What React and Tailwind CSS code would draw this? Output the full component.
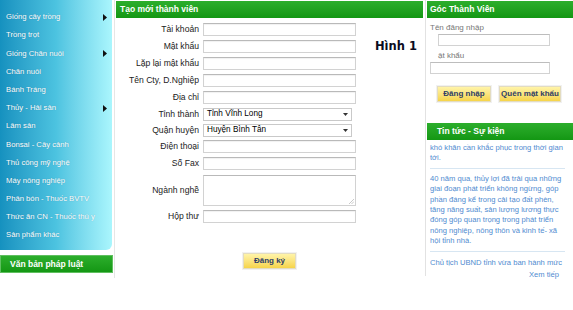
import React from "react";

const FONT = { fontFamily: '"Liberation Sans", Arial, sans-serif' };

const sideItems = [
  ["Giống cây trồng", true],
  ["Trồng trọt", false],
  ["Giống Chăn nuôi", true],
  ["Chăn nuôi", false],
  ["Bánh Tráng", false],
  ["Thủy - Hải sản", true],
  ["Lâm sản", false],
  ["Bonsai - Cây cảnh", false],
  ["Thủ công mỹ nghệ", false],
  ["Máy nông nghiệp", false],
  ["Phân bón - Thuốc BVTV", false],
  ["Thức ăn CN - Thuốc thú y", false],
  ["Sản phẩm khác", false],
];

function Arrow() {
  return (
    <svg width="4" height="7" viewBox="0 0 4 7" className="mr-[5px]">
      <polygon points="0,0 4,3.5 0,7" fill="#111" />
    </svg>
  );
}

function Input() {
  return (
    <div className="w-[153px] h-[13px] shrink-0 bg-white border border-[#d2d2d2] border-t-[#b9b9b9] shadow-[inset_0_1px_1px_rgba(0,0,0,0.06)]" />
  );
}

function Select({ value }) {
  return (
    <div className="w-[149px] h-[13px] shrink-0 bg-white border border-[#c9c9c9] flex items-center justify-between pl-[3px] pr-[3px]">
      <span className="text-[8.2px] text-black leading-none">{value}</span>
      <svg width="5" height="3" viewBox="0 0 5 3">
        <polygon points="0,0 5,0 2.5,3" fill="#333" />
      </svg>
    </div>
  );
}

function Row({ label, h = "h-[17px]", children }) {
  return (
    <div className={`flex items-center ${h}`}>
      <div className="w-[87px] shrink-0 text-right text-[8.6px] text-[#222] pr-[4px] leading-none">{label}</div>
      {children}
    </div>
  );
}

function YButton({ children, w }) {
  return (
    <div
      className={`${w} h-[16px] shrink-0 flex items-center justify-center border border-[#e3dcc0] bg-gradient-to-b from-[#fff4a8] to-[#f6d448] text-[8px] font-bold text-[#2e3d66] shadow-[0_0_0_1px_#f1f1f1]`}
    >
      {children}
    </div>
  );
}

function GreenHeader({ children, className = "" }) {
  return (
    <div
      className={`h-[17px] flex items-center bg-gradient-to-b from-[#2cae2c] to-[#139713] text-white text-[8.5px] font-bold ${className}`}
    >
      {children}
    </div>
  );
}

export default function App() {
  return (
    <div className="w-[573px] h-[310px] bg-white flex items-start overflow-hidden" style={FONT}>
      {/* Left column */}
      <div className="w-[113px] shrink-0">
        <div className="h-[250px] w-[112px] rounded-br-[6px] bg-gradient-to-r from-[#1591bf] via-[#4cc3e0] to-[#aaf6fd] pt-[8px]">
          {sideItems.map(([t, arrow]) => (
            <div key={t} className="h-[18.2px] flex items-center justify-between pl-[6px]">
              <span className="text-white text-[7.7px] leading-none [text-shadow:0_0_1px_rgba(0,60,90,0.35)]">{t}</span>
              {arrow && <Arrow />}
            </div>
          ))}
        </div>
        <div className="mt-[5px] h-[18px] w-[113px] bg-gradient-to-b from-[#2cae2c] to-[#139713] border border-[#5fbf5f] flex items-center pl-[9px] text-white text-[8.5px] font-bold">
          Văn bản pháp luật
        </div>
      </div>

      {/* separator */}
      <div className="w-px h-[278px] bg-[#e6e6e6] ml-[1px] shrink-0" />

      {/* Center column */}
      <div className="w-[307px] ml-[1px] shrink-0">
        <GreenHeader className="mt-[1px] pl-[4px]">Tạo mới thành viên</GreenHeader>
        <div className="mt-[3px]">
          <Row label="Tài khoản"><Input /></Row>
          <Row label="Mật khẩu">
            <Input />
            <span
              className="ml-[19px] text-[11.5px] font-bold text-[#0b0b1e] leading-none"
              style={{ fontFamily: '"DejaVu Sans", Verdana, sans-serif' }}
            >
              Hình 1
            </span>
          </Row>
          <Row label="Lặp lại mật khẩu"><Input /></Row>
          <Row label="Tên Cty, D.Nghiệp"><Input /></Row>
          <Row label="Địa chỉ"><Input /></Row>
          <Row label="Tỉnh thành" h="h-[16px]"><Select value="Tỉnh Vĩnh Long" /></Row>
          <Row label="Quận huyện" h="h-[16px]"><Select value="Huyện Bình Tân" /></Row>
          <Row label="Điện thoại"><Input /></Row>
          <Row label="Số Fax"><Input /></Row>
          <Row label="Ngành nghề" h="h-[36px]">
            <div className="relative w-[153px] h-[31px] shrink-0 bg-white border border-[#d2d2d2] border-t-[#b9b9b9]">
              <svg width="6" height="6" viewBox="0 0 6 6" className="absolute right-[1px] bottom-[1px]">
                <line x1="6" y1="1" x2="1" y2="6" stroke="#bbb" strokeWidth="0.8" />
                <line x1="6" y1="3.5" x2="3.5" y2="6" stroke="#bbb" strokeWidth="0.8" />
              </svg>
            </div>
          </Row>
          <Row label="Hộp thư"><Input /></Row>
        </div>
        <div className="mt-[28px] flex justify-center">
          <YButton w="w-[53px]">Đăng ký</YButton>
        </div>
      </div>

      {/* Right column */}
      <div className="ml-[2px] w-[148px] h-[276px] border-l border-[#e2e2e2] shrink-0">
        <GreenHeader className="mt-[1px] ml-[1px] pl-[3px]">Góc Thành Viên</GreenHeader>
        <div className="mt-[6px] pl-[4px] text-[8px] text-[#777] leading-none">Tên đăng nhập</div>
        <div className="mt-[2px] ml-[12px] w-[112px] h-[12px] border border-[#d2d2d2] border-t-[#bdbdbd]" />
        <div className="mt-[6px] ml-[12px] text-[8px] text-[#777] leading-none">ật khẩu</div>
        <div className="mt-[2px] ml-[4px] w-[120px] h-[12px] border border-[#d2d2d2] border-t-[#bdbdbd]" />
        <div className="mt-[12px] flex pl-[11px] gap-[8px]">
          <YButton w="w-[54px]">Đăng nhập</YButton>
          <YButton w="w-[62px]">Quên mật khẩu</YButton>
        </div>
        <GreenHeader className="mt-[21px] ml-[1px] pl-[10px]">Tin tức - Sự kiện</GreenHeader>
        <div className="pl-[4px] pr-[8px] text-[7.6px] text-[#4f8bd0] leading-[10.4px]">
          <div className="pt-[3px] pb-[4px] border-b border-[#d7e6f2]">
            khó khăn cần khắc phục trong thời gian tới.
          </div>
          <div className="pt-[5px] pb-[4px] border-b border-[#d7e6f2]">
            40 năm qua, thủy lợi đã trải qua những giai đoạn phát triển không ngừng, góp phần đáng kể trong cải tạo đất phèn, tăng năng suất, sản lượng lương thực đóng góp quan trọng trong phát triển nông nghiệp, nông thôn và kinh tế- xã hội tỉnh nhà.
          </div>
          <div className="pt-[6px]">Chủ tịch UBND tỉnh vừa ban hành mức</div>
          <div className="text-right pt-[2px] pr-[6px]">Xem tiếp</div>
        </div>
      </div>
    </div>
  );
}
